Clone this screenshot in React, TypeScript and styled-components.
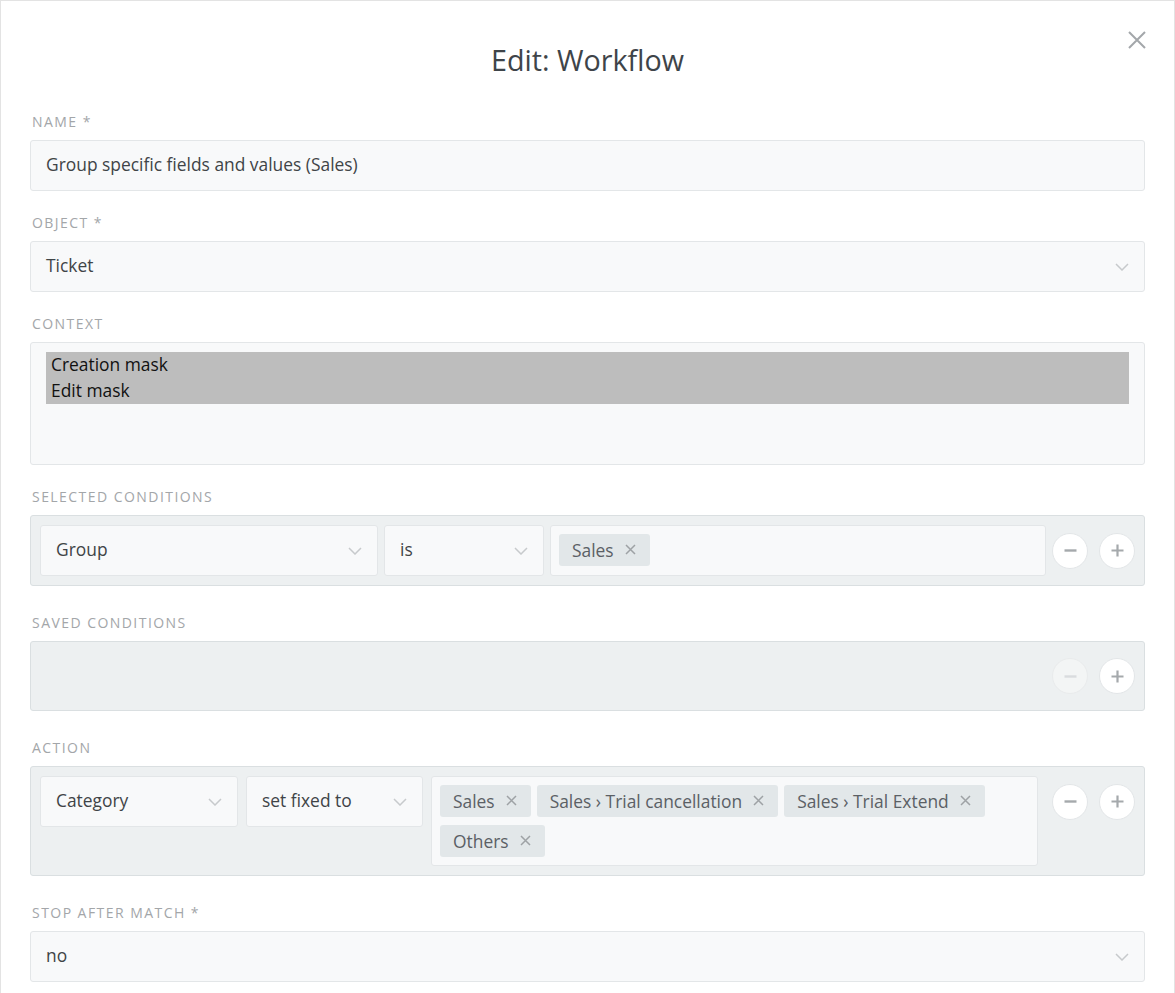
import React from 'react';
import styled, { createGlobalStyle } from 'styled-components';

const GlobalStyle = createGlobalStyle`
  html, body { margin: 0; padding: 0; background: #fff; overflow: hidden; }
  body { font-family: "Open Sans", "Noto Sans", sans-serif; -webkit-font-smoothing: antialiased; }
  * { box-sizing: border-box; }
`;

const Modal = styled.div`
  position: relative;
  width: 1175px;
  min-height: 1100px;
  border: 1px solid #e3e3e3;
  background: #fff;
  padding: 39px 29px 40px;
`;

const Title = styled.h1`
  margin: 0 0 31px;
  font-size: 28.7px;
  line-height: 40px;
  font-weight: 400;
  text-align: center;
  color: #3e4449;
`;

const CloseButton = styled.button`
  position: absolute;
  top: 30px;
  right: 28px;
  width: 18px;
  height: 18px;
  padding: 0;
  border: 0;
  background: transparent;
  display: flex;
  cursor: pointer;
`;

const Group = styled.div<{ $gap?: number }>`
  margin-bottom: ${(p) => p.$gap ?? 21}px;
`;

const Label = styled.label`
  display: block;
  padding: 2px 0 0 2px;
  margin-bottom: 9px;
  font-size: 14px;
  line-height: 18px;
  letter-spacing: 1.45px;
  text-transform: uppercase;
  color: #a3a6a9;
`;

const Field = styled.div<{ $width?: number }>`
  height: 51px;
  ${(p) => (p.$width ? `width: ${p.$width}px; flex: none;` : '')}
  display: flex;
  align-items: center;
  justify-content: space-between;
  padding: 0 15px;
  border: 1px solid #e3e6e8;
  border-radius: 3px;
  background: #f8f9fa;
  font-size: 17.4px;
  color: #3f4447;
`;

const FieldText = styled.span`
  padding-bottom: 3px;
`;

const MultiSelect = styled.div`
  height: 123px;
  padding: 9px 15px;
  border: 1px solid #e3e6e8;
  border-radius: 3px;
  background: #f8f9fa;
`;

const Option = styled.div`
  height: 26px;
  line-height: 25px;
  padding: 0 5px;
  background: #bdbdbd;
  color: #111;
  font-size: 17.4px;
`;

const Panel = styled.div`
  padding: 9px;
  border: 1px solid #dadfe1;
  border-radius: 3px;
  background: #edf0f1;
`;

const Row = styled.div<{ $gap: number; $min?: number }>`
  display: flex;
  align-items: flex-start;
  gap: ${(p) => p.$gap}px;
  min-height: ${(p) => p.$min ?? 51}px;
`;

const TagBox = styled.div<{ $mr?: number }>`
  flex: 1;
  min-height: 51px;
  display: flex;
  flex-wrap: wrap;
  align-content: flex-start;
  gap: 8px 6px;
  padding: 8px;
  margin-right: ${(p) => p.$mr ?? 0}px;
  border: 1px solid #e3e6e8;
  border-radius: 3px;
  background: #f8f9fa;
`;

const Tag = styled.span`
  display: inline-flex;
  align-items: center;
  gap: 11px;
  height: 32px;
  padding: 0 14px 1px 13px;
  border-radius: 3px;
  background: #e2e7e9;
  color: #5b6065;
  font-size: 17.4px;
  white-space: nowrap;
`;

const Controls = styled.div<{ $h?: number }>`
  flex: none;
  height: ${(p) => p.$h ?? 51}px;
  display: flex;
  align-items: center;
  gap: 11px;
  margin-left: auto;
`;

const RoundButton = styled.button<{ $disabled?: boolean }>`
  width: 36px;
  height: 36px;
  padding: 0;
  border-radius: 50%;
  border: 1px solid ${(p) => (p.$disabled ? '#e9ebec' : '#e3e6e8')};
  background: ${(p) => (p.$disabled ? '#f3f5f5' : '#ffffff')};
  display: flex;
  align-items: center;
  justify-content: center;
  color: ${(p) => (p.$disabled ? '#d9dcde' : '#a5a9ac')};
  cursor: pointer;
`;

const Chevron = () => (
  <svg width="14" height="8" viewBox="0 0 14 8" fill="none">
    <path d="M1 1l6 6 6-6" stroke="#c7cacc" strokeWidth="1.5" />
  </svg>
);

const TagX = () => (
  <svg width="11" height="11" viewBox="0 0 11 11" fill="none">
    <path d="M1 1l9 9M10 1l-9 9" stroke="#9ea2a5" strokeWidth="1.5" />
  </svg>
);

const Minus = () => (
  <svg width="13" height="13" viewBox="0 0 13 13" fill="none">
    <path d="M0.5 6.5h12" stroke="currentColor" strokeWidth="2.4" />
  </svg>
);

const Plus = () => (
  <svg width="13" height="13" viewBox="0 0 13 13" fill="none">
    <path d="M0.5 6.5h12M6.5 0.5v12" stroke="currentColor" strokeWidth="2.2" />
  </svg>
);

const Select = ({ value, width }: { value: string; width?: number }) => (
  <Field $width={width}>
    <FieldText>{value}</FieldText>
    <Chevron />
  </Field>
);

const Buttons = ({ minusDisabled, h }: { minusDisabled?: boolean; h?: number }) => (
  <Controls $h={h}>
    <RoundButton $disabled={minusDisabled}>
      <Minus />
    </RoundButton>
    <RoundButton>
      <Plus />
    </RoundButton>
  </Controls>
);

const TagItem = ({ text }: { text: string }) => (
  <Tag>
    {text}
    <TagX />
  </Tag>
);

export default function App() {
  return (
    <>
      <GlobalStyle />
      <Modal>
        <Title>Edit: Workflow</Title>
        <CloseButton aria-label="close">
          <svg width="18" height="18" viewBox="0 0 18 18" fill="none">
            <path d="M1 1l16 16M17 1L1 17" stroke="#a3a7aa" strokeWidth="2" />
          </svg>
        </CloseButton>

        <Group>
          <Label>Name *</Label>
          <Field>
            <FieldText>Group specific fields and values (Sales)</FieldText>
          </Field>
        </Group>

        <Group>
          <Label>Object *</Label>
          <Select value="Ticket" />
        </Group>

        <Group>
          <Label>Context</Label>
          <MultiSelect>
            <Option>Creation mask</Option>
            <Option>Edit mask</Option>
          </MultiSelect>
        </Group>

        <Group $gap={26}>
          <Label>Selected Conditions</Label>
          <Panel>
            <Row $gap={6}>
              <Select value="Group" width={338} />
              <Select value="is" width={160} />
              <TagBox>
                <TagItem text="Sales" />
              </TagBox>
              <Buttons />
            </Row>
          </Panel>
        </Group>

        <Group $gap={26}>
          <Label>Saved Conditions</Label>
          <Panel>
            <Row $gap={6} $min={50}>
              <Buttons minusDisabled h={50} />
            </Row>
          </Panel>
        </Group>

        <Group $gap={26}>
          <Label>Action</Label>
          <Panel>
            <Row $gap={8}>
              <Select value="Category" width={198} />
              <Select value="set fixed to" width={177} />
              <TagBox $mr={6}>
                <TagItem text="Sales" />
                <TagItem text="Sales › Trial cancellation" />
                <TagItem text="Sales › Trial Extend" />
                <TagItem text="Others" />
              </TagBox>
              <Buttons />
            </Row>
          </Panel>
        </Group>

        <Group>
          <Label>Stop after match *</Label>
          <Select value="no" />
        </Group>
      </Modal>
    </>
  );
}
